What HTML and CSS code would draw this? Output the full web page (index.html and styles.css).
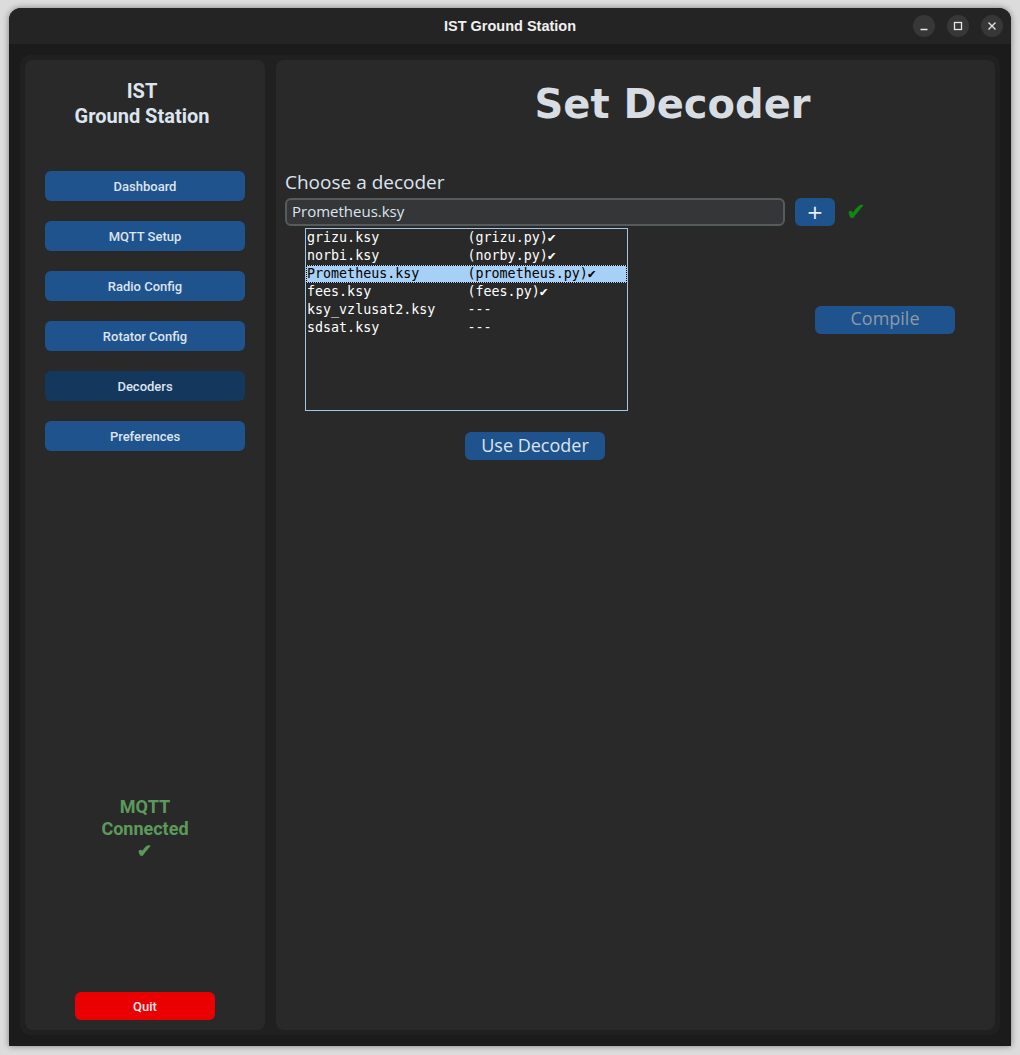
FILE: index.html
```html
<!DOCTYPE html>
<html>
<head>
<meta charset="utf-8">
<link rel="stylesheet" href="styles.css">
</head>
<body>
<div class="window">
  <div class="titlebar">
    <div></div>
    <div class="title">IST Ground Station</div>
    <div class="controls">
      <span class="ctl"><svg width="10" height="10" viewBox="0 0 10 10"><path d="M1.5 8.5h7" stroke="#e6e6e6" stroke-width="1.3"/></svg></span>
      <span class="ctl"><svg width="10" height="10" viewBox="0 0 10 10"><rect x="1.5" y="1.5" width="7" height="7" fill="none" stroke="#e6e6e6" stroke-width="1.3"/></svg></span>
      <span class="ctl"><svg width="10" height="10" viewBox="0 0 10 10"><path d="M1.5 1.5l7 7M8.5 1.5l-7 7" stroke="#e6e6e6" stroke-width="1.3"/></svg></span>
    </div>
  </div>
  <div class="winbody">
    <div class="container">
      <aside class="sidebar">
        <div class="brand">IST<br>Ground Station</div>
        <nav class="nav">
          <button class="navbtn">Dashboard</button>
          <button class="navbtn">MQTT Setup</button>
          <button class="navbtn">Radio Config</button>
          <button class="navbtn">Rotator Config</button>
          <button class="navbtn active">Decoders</button>
          <button class="navbtn">Preferences</button>
        </nav>
        <div class="status">MQTT<br>Connected<br>✔</div>
        <button class="quit">Quit</button>
      </aside>
      <main class="main">
        <h1 class="heading">Set Decoder</h1>
        <div class="grid">
          <div class="label">Choose a decoder</div>
          <div></div>
          <div class="entry">Prometheus.ksy</div>
          <div class="addrow"><button class="plus">+</button><span class="ok">✔</span></div>
          <div class="listwrap">
            <div class="listbox">
              <div class="row">grizu.ksy           (grizu.py)✔</div>
              <div class="row">norbi.ksy           (norby.py)✔</div>
              <div class="row sel">Prometheus.ksy      (prometheus.py)✔</div>
              <div class="row">fees.ksy            (fees.py)✔</div>
              <div class="row">ksy_vzlusat2.ksy    ---</div>
              <div class="row">sdsat.ksy           ---</div>
            </div>
          </div>
          <div class="compilecell"><button class="btn disabled">Compile</button></div>
          <div class="usecell"><button class="btn">Use Decoder</button></div>
          <div></div>
        </div>
      </main>
    </div>
  </div>
</div>
</body>
</html>
```
FILE: styles.css
```css
* { box-sizing: border-box; }
html, body { margin: 0; padding: 0; }
body {
  width: 1020px;
  height: 1055px;
  background: #dcdcdc;
  padding: 8px 9px 0 9px;
  overflow: hidden;
}
.window {
  width: 1002px;
  height: 1038px;
  border-radius: 12px 12px 0 0;
  background: #1b1b1b;
  box-shadow: 0 0 6px rgba(0,0,0,0.45);
  overflow: hidden;
  display: flex;
  flex-direction: column;
}
.titlebar {
  height: 36px;
  flex: none;
  background: #242424;
  display: grid;
  grid-template-columns: 1fr auto 1fr;
  align-items: center;
  padding: 0 8px;
}
.title {
  font-family: "Liberation Sans", Arial, sans-serif;
  font-weight: bold;
  font-size: 14.5px;
  color: #f0f0f0;
}
.controls {
  justify-self: end;
  display: flex;
  gap: 12px;
}
.ctl {
  width: 22px;
  height: 22px;
  border-radius: 50%;
  background: #373737;
  display: flex;
  align-items: center;
  justify-content: center;
}
.winbody {
  flex: 1;
  padding: 11px;
  display: flex;
}
.container {
  flex: 1;
  background: #202020;
  border-radius: 10px;
  padding: 5px;
  display: flex;
  gap: 11px;
}
.sidebar {
  width: 240px;
  flex: none;
  background: #292929;
  border-radius: 8px;
  display: flex;
  flex-direction: column;
  align-items: center;
  padding: 19px 0 10px 0;
}
.brand {
  font-family: Roboto, "Liberation Sans", sans-serif;
  font-weight: bold;
  font-size: 20px;
  line-height: 25px;
  color: #dce4ee;
  text-align: center;
  margin-right: 6px;
}
.nav {
  margin-top: 42px;
  display: flex;
  flex-direction: column;
  gap: 20px;
}
button {
  border: none;
  margin: 0;
  padding: 0;
  cursor: pointer;
}
.navbtn {
  width: 200px;
  height: 30px;
  border-radius: 6px;
  background: #1f538d;
  color: #dce4ee;
  font-family: Roboto, "Liberation Sans", sans-serif;
  font-weight: 500;
  font-size: 13px;
}
.navbtn.active { background: #14375e; }
.status {
  margin-top: auto;
  font-family: Roboto, "Liberation Sans", sans-serif;
  font-weight: bold;
  font-size: 18px;
  line-height: 22px;
  color: #5c9a5c;
  text-align: center;
}
.quit {
  margin-top: 130px;
  width: 140px;
  height: 28px;
  border-radius: 6px;
  background: #ea0000;
  color: #f0e8ee;
  font-family: Roboto, "Liberation Sans", sans-serif;
  font-weight: 500;
  font-size: 13px;
}
.main {
  flex: 1;
  background: #292929;
  border-radius: 8px;
  padding: 20px 10px 0 9px;
}
.heading {
  margin: 0;
  padding-left: 75px;
  text-align: center;
  font-family: "DejaVu Sans", sans-serif;
  font-weight: bold;
  font-size: 40px;
  line-height: 48px;
  color: #d8dde3;
}
.grid {
  margin-top: 41px;
  display: grid;
  grid-template-columns: 500px 200px;
}
.label {
  font-family: "Open Sans", "Noto Sans", sans-serif;
  font-size: 19px;
  line-height: 26px;
  color: #dce4ee;
  margin-bottom: 3px;
}
.entry {
  height: 28px;
  background: #343638;
  border: 2px solid #565b5e;
  border-radius: 6px;
  padding-left: 5px;
  font-family: "Open Sans", "Noto Sans", sans-serif;
  font-size: 15px;
  line-height: 23px;
  color: #dce4ee;
}
.addrow {
  display: flex;
  align-items: center;
  padding-left: 10px;
}
.plus {
  width: 40px;
  height: 28px;
  border-radius: 6px;
  background: #1f538d;
  color: #e8eef4;
  font-family: "DejaVu Sans", sans-serif;
  font-size: 20px;
  line-height: 28px;
}
.ok {
  margin-left: 11px;
  color: #0e8a0e;
  font-family: "DejaVu Sans", sans-serif;
  font-size: 24px;
  line-height: 28px;
}
.listwrap {
  padding: 2px 0 0 20px;
}
.listbox {
  width: 323px;
  height: 183px;
  border: 1px solid #a2c6e4;
  padding: 0 0 0 1px;
  background: #292929;
}
.row {
  height: 18px;
  font-family: "DejaVu Sans Mono", monospace;
  font-size: 13.33px;
  line-height: 18px;
  color: #ffffff;
  white-space: pre;
}
.row.sel {
  background: #a6d0f6;
  color: #000000;
  outline: 1px dotted #000;
  outline-offset: -1px;
  margin-left: -1px;
  padding-left: 1px;
}
.compilecell {
  display: flex;
  align-items: center;
  justify-content: center;
  padding-top: 2px;
}
.btn {
  width: 140px;
  height: 28px;
  border-radius: 6px;
  background: #1f538d;
  color: #dce4ee;
  font-family: "Open Sans", "Noto Sans", sans-serif;
  font-size: 18px;
  line-height: 25px;
  padding-bottom: 2px;
}
.btn.disabled { color: #8c9aa8; }
.usecell {
  display: flex;
  justify-content: center;
  padding-top: 21px;
}
```
